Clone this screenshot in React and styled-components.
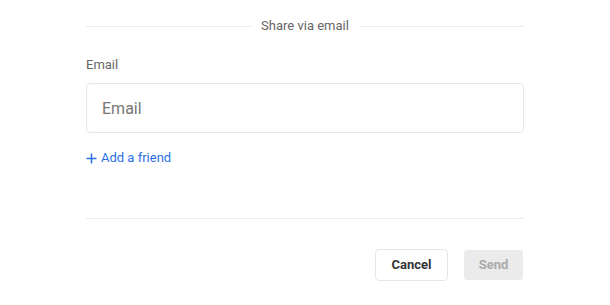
import React from "react";
import styled, { createGlobalStyle } from "styled-components";

const Global = createGlobalStyle`
  html, body { margin: 0; padding: 0; background: #fff; }
  body { font-family: Roboto, "Noto Sans", sans-serif; -webkit-font-smoothing: antialiased; }
  * { box-sizing: border-box; }
`;

const Panel = styled.div`
  width: 438px;
  margin: 0 auto;
  padding-top: 16px;
  display: flex;
  flex-direction: column;
`;

const TitleRow = styled.div`
  display: flex;
  align-items: center;
  gap: 10px;
  height: 20px;
  &::before, &::after {
    content: "";
    flex: 1;
    height: 1px;
    background: #ebebeb;
  }
`;

const Title = styled.span`
  font-size: 13px;
  color: #666;
  line-height: 20px;
`;

const Label = styled.label`
  margin-top: 21px;
  font-size: 13px;
  line-height: 16px;
  color: #666;
`;

const Input = styled.input`
  margin-top: 10px;
  height: 50px;
  width: 100%;
  border: 1px solid #e8e8e8;
  border-radius: 4px;
  padding: 0 15px;
  font-family: inherit;
  font-size: 16px;
  color: #333;
  outline: none;
  &::placeholder { color: #777; }
`;

const AddLink = styled.button`
  margin-top: 17px;
  align-self: flex-start;
  display: flex;
  align-items: center;
  gap: 4px;
  background: none;
  border: none;
  padding: 0;
  font-family: inherit;
  font-size: 13px;
  line-height: 16px;
  color: #2a6fe6;
  cursor: pointer;
`;

const Divider = styled.hr`
  margin: 52px 0 0;
  border: none;
  height: 1px;
  background: #ebebeb;
`;

const Actions = styled.div`
  margin-top: 30px;
  display: flex;
  justify-content: flex-end;
  align-items: flex-start;
  gap: 15px;
`;

const Button = styled.button`
  height: 32px;
  width: ${(p) => (p.$primary ? "61px" : "73px")};
  padding: 0 0 1px;
  border-radius: 4px;
  font-family: inherit;
  font-size: 13px;
  line-height: 29px;
  font-weight: 700;
  border: 1px solid ${(p) => (p.$primary ? "#fff" : "#e6e6e6")};
  background: ${(p) => (p.$primary ? "#ebebeb" : "#fff")};
  color: ${(p) => (p.$primary ? "#a9a9a9" : "#333")};
`;

export default function App() {
  return (
    <>
      <Global />
      <Panel>
        <TitleRow>
          <Title>Share via email</Title>
        </TitleRow>
        <Label htmlFor="email">Email</Label>
        <Input id="email" placeholder="Email" />
        <AddLink>
          <svg width="11" height="11" viewBox="0 0 11 11">
            <path d="M5.5 0.5v10M0.5 5.5h10" stroke="#2a6fe6" strokeWidth="1.5" />
          </svg>
          Add a friend
        </AddLink>
        <Divider />
        <Actions>
          <Button>Cancel</Button>
          <Button $primary disabled>Send</Button>
        </Actions>
      </Panel>
    </>
  );
}
